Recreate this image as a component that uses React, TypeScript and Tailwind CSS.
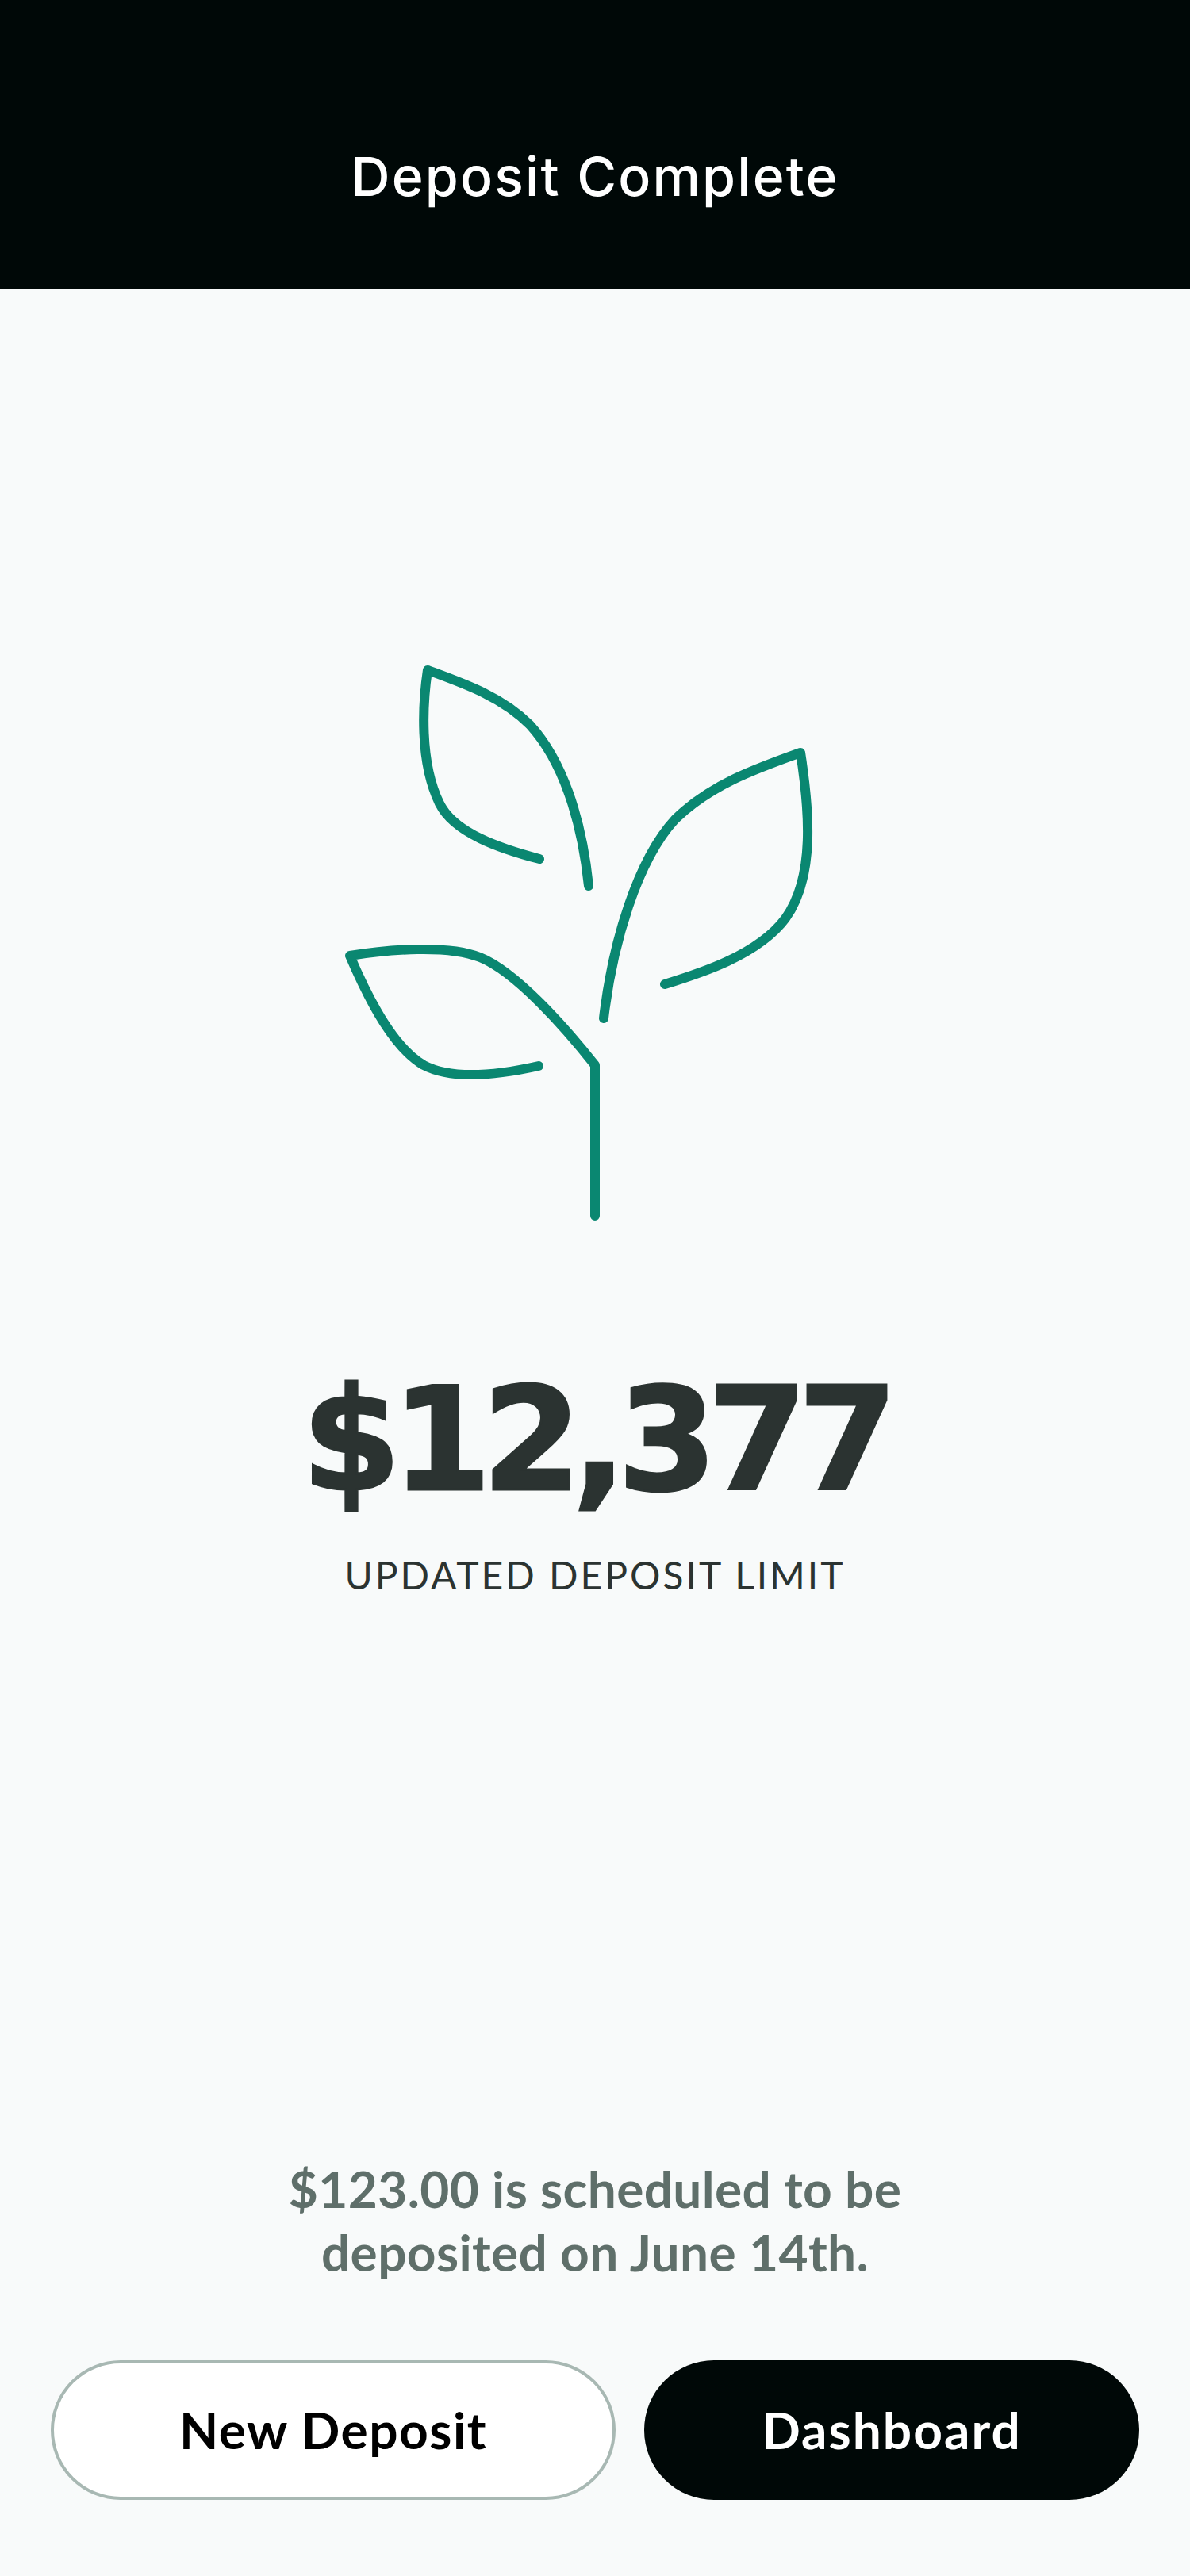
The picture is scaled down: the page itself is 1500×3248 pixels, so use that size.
const Plant = () => (
  <svg
    viewBox="400 830 700 710"
    className="w-[700px] h-[710px]"
    fill="none"
    stroke="#0a8771"
    strokeWidth={12}
    strokeLinecap="round"
    strokeLinejoin="round"
  >
    <path d="M750 1533 V1343 C712 1295 650 1225 605 1207 C565 1191 490 1197 441 1205 C468 1268 498 1322 534 1343 C570 1362 630 1355 679 1344" />
    <path d="M742 1117 C733 1030 708 958 668 914 C632 878 585 862 539 845 C533 885 528 960 554 1013 C572 1050 630 1070 680 1083" />
    <path d="M761 1284 C772 1190 803 1085 851 1033 C895 990 950 970 1009 949 C1020 1020 1028 1105 990 1158 C955 1205 880 1228 838 1241" />
  </svg>
)

export default function App() {
  return (
    <div className="flex h-[3248px] w-[1500px] flex-col bg-[#f8fafa] font-['Lato',sans-serif]">
      <header className="flex h-[364px] items-start justify-center bg-[#000807] pt-[178px]">
        <h1 className="font-['Inter',sans-serif] text-[68px] leading-[88px] font-medium tracking-[2.2px] text-white">
          Deposit Complete
        </h1>
      </header>

      <main className="flex flex-1 flex-col items-center pt-[466px]">
        <Plant />
        <div className="mt-[166px] font-['DejaVu_Sans',sans-serif] text-[180px] leading-[220px] font-bold tracking-[-11.5px] text-[#2b3331] [-webkit-text-stroke:3px_#2b3331]">
          $12,377
        </div>
        <p className="mt-[30px] text-[48px] leading-[60px] tracking-[3px] text-[#2b3331] uppercase">
          Updated deposit limit
        </p>

        <p className="mt-auto text-center text-[64px] leading-[80px] font-bold tracking-[0.35px] text-[#5f6f6a]">
          $123.00 is scheduled to be
          <br />
          deposited on June 14th.
        </p>
      </main>

      <footer className="flex gap-9 px-16 py-24">
        <button className="h-[176px] w-[712px] rounded-full border-4 border-[#a8b8b3] bg-white text-[64px] font-bold tracking-[1.5px] text-black">
          New Deposit
        </button>
        <button className="h-[176px] w-[624px] rounded-full bg-[#000807] text-[64px] font-bold tracking-[2px] text-white">
          Dashboard
        </button>
      </footer>
    </div>
  )
}
